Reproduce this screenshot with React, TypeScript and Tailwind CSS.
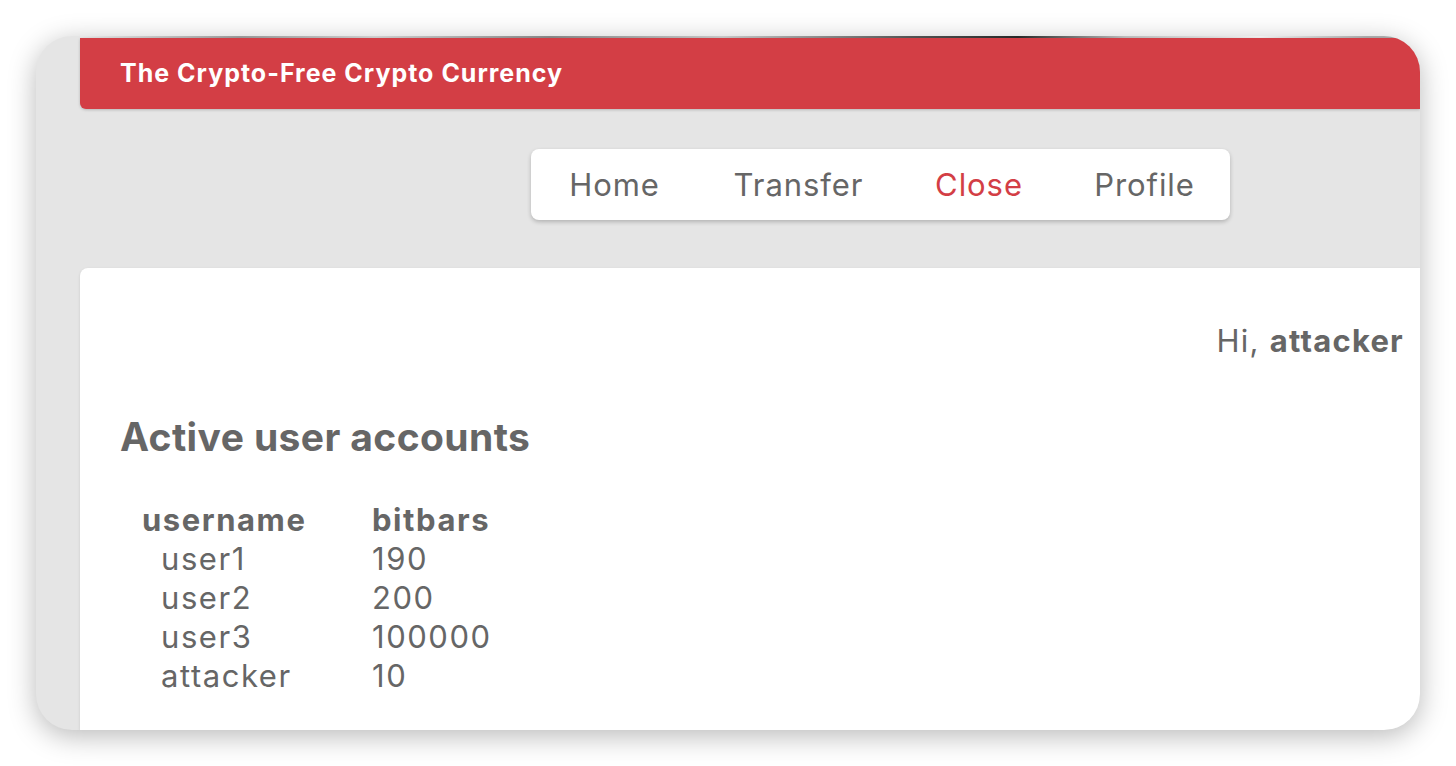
const accounts = [
  { name: 'user1', bits: 190 },
  { name: 'user2', bits: 200 },
  { name: 'user3', bits: 100000 },
  { name: 'attacker', bits: 10 },
];

const nav = [
  { label: 'Home', w: 'w-[167px]', active: false },
  { label: 'Transfer', w: 'w-[201px]', active: false },
  { label: 'Close', w: 'w-[160px]', active: true },
  { label: 'Profile', w: 'w-[171px]', active: false },
];

export default function App() {
  return (
    <div className="w-[1456px] h-[766px] bg-white pt-[36px] pl-[36px] font-['Inter',sans-serif] text-[#666]">
      <div className="w-[1384px] h-[694px] rounded-[36px] overflow-hidden bg-[#e5e5e5] shadow-[0_6px_28px_rgba(0,0,0,0.28)] pl-[44px] flex flex-col">
        <div className="h-[2px] bg-[linear-gradient(90deg,#e8e8e8,#9a9a9a_12%,#d0d0d0_22%,#888_35%,#c8c8c8_48%,#555_62%,#2a2a2a_70%,#bdbdbd_78%,#f0f0f0_88%,#aaa_96%)]" />
        <header className="h-[71px] bg-[#d33e45] rounded-bl-[6px] shadow-[0_1px_3px_rgba(0,0,0,0.2)] flex items-center pl-[40px]">
          <h1 className="text-white font-bold text-[25px] tracking-[0.04em] leading-none">
            The Crypto-Free Crypto Currency
          </h1>
        </header>

        <nav className="mt-[40px] ml-[451px] w-[699px] h-[71px] bg-white rounded-[8px] shadow-[0_2px_4px_rgba(0,0,0,0.22)] flex items-center">
          {nav.map((n) => (
            <a
              key={n.label}
              href="#"
              className={`${n.w} text-center text-[31px] tracking-[0.03em] leading-none ${n.active ? 'text-[#d33e45]' : 'text-[#666]'}`}
            >
              {n.label}
            </a>
          ))}
        </nav>

        <main className="mt-[48px] flex-1 bg-white rounded-tl-[8px] shadow-[0_1px_3px_rgba(0,0,0,0.12)] pl-[40px] pr-[16px]">
          <div className="pt-[53px] text-right text-[31px] tracking-[0.04em] leading-[39px]">
            Hi, <span className="font-bold">attacker</span>
          </div>

          <h2 className="mt-[53px] text-[39px] font-bold leading-[48px] tracking-[0.01em]">Active user accounts</h2>

          <table className="mt-[39px] ml-[22px] text-[31px] tracking-[0.05em] leading-[39px]">
            <thead>
              <tr>
                <th className="w-[230px] font-bold text-left">username</th>
                <th className="font-bold text-left">bitbars</th>
              </tr>
            </thead>
            <tbody>
              {accounts.map((a) => (
                <tr key={a.name}>
                  <td className="pl-[19px]">{a.name}</td>
                  <td>{a.bits}</td>
                </tr>
              ))}
            </tbody>
          </table>
        </main>
      </div>
    </div>
  );
}
